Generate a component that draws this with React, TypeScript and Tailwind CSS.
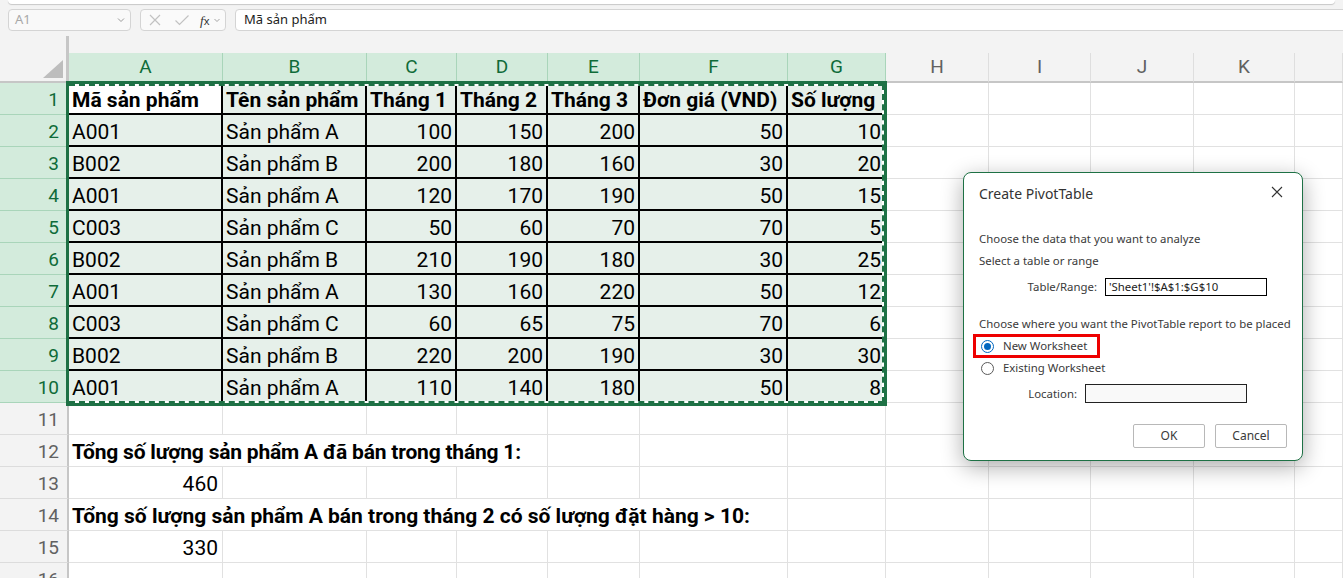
import React from "react";

const data: (string | number)[][] = [
  ["Mã sản phẩm", "Tên sản phẩm", "Tháng 1", "Tháng 2", "Tháng 3", "Đơn giá (VND)", "Số lượng"],
  ["A001", "Sản phẩm A", 100, 150, 200, 50, 10],
  ["B002", "Sản phẩm B", 200, 180, 160, 30, 20],
  ["A001", "Sản phẩm A", 120, 170, 190, 50, 15],
  ["C003", "Sản phẩm C", 50, 60, 70, 70, 5],
  ["B002", "Sản phẩm B", 210, 190, 180, 30, 25],
  ["A001", "Sản phẩm A", 130, 160, 220, 50, 12],
  ["C003", "Sản phẩm C", 60, 65, 75, 70, 6],
  ["B002", "Sản phẩm B", 220, 200, 190, 30, 30],
  ["A001", "Sản phẩm A", 110, 140, 180, 50, 8],
];

const letters = ["A", "B", "C", "D", "E", "F", "G", "H", "I", "J", "K", ""];

const GRID =
  "grid grid-cols-[69px_154px_144px_90px_91px_92px_148px_98px_103px_102px_103px_101px_1fr] grid-rows-[32px] h-[32px] overflow-visible";

function RowHeader({ n, selected }: { n: number; selected: boolean }) {
  return (
    <div
      className={
        selected
          ? "flex items-center justify-end pr-[8px] pt-[3px] text-[19px] leading-[22px] bg-[#d3ebdc] text-[#0f6b39] border-b border-[#a9d5ba] border-r-2 border-r-[#1e7145]"
          : "flex items-center justify-end pr-[8px] pt-[3px] text-[19px] leading-[22px] bg-[#f3f3f3] text-[#616161] border-b border-[#dcdcdc] border-r-2 border-r-[#c6c6c6]"
      }
    >
      {n}
    </div>
  );
}

function EmptyCell() {
  return <div className="border-r border-b border-[#e1e1e1] bg-white" />;
}

function EmptyCells({ count }: { count: number }) {
  return (
    <>
      {Array.from({ length: count }).map((_, i) => (
        <EmptyCell key={i} />
      ))}
    </>
  );
}

export default function App() {
  return (
    <div
      className="relative w-[1343px] h-[578px] overflow-hidden bg-white"
      style={{ fontFamily: "Roboto, 'Liberation Sans', sans-serif" }}
    >
      {/* Top area */}
      <div className="h-[53px] bg-[#f3f3f3] flex flex-col">
        <div className="ml-[8px] mr-[8px] h-[4px] bg-white rounded-b-[6px] shadow-[0_1px_1px_rgba(0,0,0,0.18)]" />
        <div className="mt-[5px] h-[22px] flex items-stretch">
          <div className="ml-[8px] w-[123px] border border-[#d4d4d4] rounded-[4px] bg-[#f9f9f9] flex items-center justify-between pl-[6px] pr-[4px]">
            <span className="text-[13px] text-[#a8a8a8]" style={{ fontFamily: "'Noto Sans', sans-serif" }}>A1</span>
            <svg width="10" height="10" viewBox="0 0 10 10">
              <path d="M2 3.5 L5 6.5 L8 3.5" fill="none" stroke="#9a9a9a" strokeWidth="1" />
            </svg>
          </div>
          <div className="ml-[9px] w-[86px] border border-[#d4d4d4] rounded-[4px] bg-[#fafafa] flex items-center pl-[7px]">
            <svg width="14" height="14" viewBox="0 0 14 14">
              <path d="M2 2 L12 12 M12 2 L2 12" stroke="#c2c2c2" strokeWidth="1.2" />
            </svg>
            <svg width="16" height="14" viewBox="0 0 16 14" className="ml-[12px]">
              <path d="M1.5 7.5 L5.5 11.5 L14.5 2.5" fill="none" stroke="#c2c2c2" strokeWidth="1.2" />
            </svg>
            <span className="ml-[10px] text-[13px] text-[#333] italic leading-none" style={{ fontFamily: "'Liberation Serif', serif" }}>
              f<span className="text-[11px] not-italic" style={{ fontFamily: "'Noto Sans', sans-serif" }}>x</span>
            </span>
            <svg width="8" height="8" viewBox="0 0 8 8" className="ml-[4px]">
              <path d="M1.5 3 L4 5.5 L6.5 3" fill="none" stroke="#9a9a9a" strokeWidth="0.9" />
            </svg>
          </div>
          <div className="ml-[9px] flex-1 mr-[-12px] border border-[#d4d4d4] rounded-[4px] bg-white flex items-center pl-[8px]">
            <span className="text-[13px] text-[#222]" style={{ fontFamily: "'Noto Sans', sans-serif" }}>Mã sản phẩm</span>
          </div>
        </div>
        <div className="mt-[5px] ml-[66px] w-[3px] flex-1 bg-[#c6c6c6]" />
      </div>

      {/* Column headers */}
      <div className="grid grid-cols-[69px_154px_144px_90px_91px_92px_148px_98px_103px_102px_103px_101px_1fr] h-[30px]">
        <div className="relative bg-[#f3f3f3] border-r-[3px] border-b-2 border-[#c6c6c6]">
          <svg className="absolute left-[43px] top-[7px]" width="20" height="18" viewBox="0 0 20 18">
            <path d="M20 0 L20 18 L0 18 Z" fill="#bdbdbd" />
          </svg>
        </div>
        {letters.map((l, i) =>
          i < 7 ? (
            <div
              key={i}
              className="flex items-center justify-center text-[19px] leading-[22px] bg-[#d3ebdc] text-[#0f6b39] border-r border-[#a9d5ba] border-b-2 border-b-[#1e7145]"
            >
              {l}
            </div>
          ) : (
            <div
              key={i}
              className="flex items-center justify-center text-[19px] leading-[22px] bg-[#f3f3f3] text-[#616161] border-r border-[#dedede] border-b-2 border-b-[#c6c6c6]"
            >
              {l}
            </div>
          )
        )}
      </div>

      {/* Data rows 1-10 */}
      {data.map((row, r) => (
        <div key={r} className={GRID}>
          <RowHeader n={r + 1} selected />
          {row.map((v, c) => {
            const isNum = typeof v === "number";
            const bg = r === 0 && c === 0 ? "bg-white" : "bg-[#e6f0ea]";
            return (
              <div
                key={c}
                className={`${bg} border-r-2 border-b-2 border-black flex items-center pt-[3px] text-[21px] leading-[24px] text-black whitespace-nowrap overflow-visible ${
                  isNum ? "justify-end pr-[3px]" : "justify-start pl-[3px]"
                } ${r === 0 ? "font-bold" : ""}`}
              >
                {v}
              </div>
            );
          })}
          <EmptyCells count={5} />
        </div>
      ))}

      {/* Row 11 */}
      <div className={GRID}>
        <RowHeader n={11} selected={false} />
        <EmptyCells count={12} />
      </div>

      {/* Row 12 */}
      <div className={GRID}>
        <RowHeader n={12} selected={false} />
        <div className="col-span-4 border-r border-b border-[#e1e1e1] flex items-center pt-[3px] pl-[3px] text-[21px] leading-[24px] font-bold tracking-[-0.2px] text-black whitespace-nowrap">
          Tổng số lượng sản phẩm A đã bán trong tháng 1:
        </div>
        <EmptyCells count={8} />
      </div>

      {/* Row 13 */}
      <div className={GRID}>
        <RowHeader n={13} selected={false} />
        <div className="border-r border-b border-[#e1e1e1] flex items-center justify-end pt-[3px] pr-[4px] text-[21px] leading-[24px] text-black">
          460
        </div>
        <EmptyCells count={11} />
      </div>

      {/* Row 14 */}
      <div className={GRID}>
        <RowHeader n={14} selected={false} />
        <div className="col-span-6 border-r border-b border-[#e1e1e1] flex items-center pt-[3px] pl-[3px] text-[21px] leading-[24px] font-bold text-black whitespace-nowrap">
          Tổng số lượng sản phẩm A bán trong tháng 2 có số lượng đặt hàng &gt; 10:
        </div>
        <EmptyCells count={6} />
      </div>

      {/* Row 15 */}
      <div className={GRID}>
        <RowHeader n={15} selected={false} />
        <div className="border-r border-b border-[#e1e1e1] flex items-center justify-end pt-[3px] pr-[4px] text-[21px] leading-[24px] text-black">
          330
        </div>
        <EmptyCells count={11} />
      </div>

      {/* Row 16 */}
      <div className={GRID}>
        <RowHeader n={16} selected={false} />
        <EmptyCells count={12} />
      </div>

      {/* Selection outline with marching ants */}
      <div className="absolute left-[66px] top-[81px] w-[821px] h-[325px] border-[3px] border-[#1e7145] pointer-events-none">
        <div className="absolute inset-0 border-2 border-l-0 border-white" />
        <div className="absolute inset-0 border-2 border-l-0 border-dashed border-[#1e7145]" />
      </div>

      {/* Dialog */}
      <div
        className="absolute left-[963px] top-[172px] w-[340px] h-[289px] bg-white border border-[#1e7145] rounded-[8px] shadow-[0_6px_22px_rgba(0,0,0,0.33)] flex flex-col px-[15px] pt-[11px] text-[#3a3a3a]"
        style={{ fontFamily: "'Noto Sans', 'Open Sans', sans-serif" }}
      >
        <div className="flex items-center justify-between h-[18px]">
          <span className="text-[14px] text-[#333]">Create PivotTable</span>
          <svg width="12" height="12" viewBox="0 0 12 12" className="mr-[4px] -mt-[2px]">
            <path d="M1 1 L11 11 M11 1 L1 11" stroke="#333" strokeWidth="1.1" />
          </svg>
        </div>
        <div className="mt-[29px] text-[11.4px] leading-[16px]">Choose the data that you want to analyze</div>
        <div className="mt-[6px] text-[11.4px] leading-[16px]">Select a table or range</div>
        <div className="mt-[9px] flex items-center">
          <span className="w-[118px] text-right text-[11.4px] leading-[16px]">Table/Range:</span>
          <div className="ml-[8px] w-[162px] h-[18px] border border-black flex items-center pl-[3px] text-[11.4px] text-[#222]">
            'Sheet1'!$A$1:$G$10
          </div>
        </div>
        <div className="mt-[20px] text-[11.4px] leading-[16px] whitespace-nowrap">
          Choose where you want the PivotTable report to be placed
        </div>
        <div className="mt-[2px] ml-[-6px] w-[127px] h-[24px] border-[3px] border-[#ee0000] flex items-center pl-[5px]">
          <div className="w-[13px] h-[13px] rounded-full border-[1.5px] border-[#0067c0] flex items-center justify-center">
            <div className="w-[7px] h-[7px] rounded-full bg-[#0067c0]" />
          </div>
          <span className="ml-[9px] text-[11.4px]">New Worksheet</span>
        </div>
        <div className="mt-[2px] ml-[2px] h-[16px] flex items-center">
          <div className="w-[13px] h-[13px] rounded-full border border-[#5a5a5a]" />
          <span className="ml-[9px] text-[11.4px]">Existing Worksheet</span>
        </div>
        <div className="mt-[8px] flex items-center">
          <span className="w-[98px] text-right text-[11.4px] leading-[16px]">Location:</span>
          <div className="ml-[8px] w-[162px] h-[19px] border border-[#222] bg-[#f9f9f9]" />
        </div>
        <div className="mt-[21px] flex justify-end gap-[10px]">
          <div className="w-[72px] h-[24px] border border-[#b8b8b8] rounded-[2px] flex items-center justify-center text-[12px]">
            OK
          </div>
          <div className="w-[72px] h-[24px] border border-[#b8b8b8] rounded-[2px] flex items-center justify-center text-[12px]">
            Cancel
          </div>
        </div>
      </div>
    </div>
  );
}
